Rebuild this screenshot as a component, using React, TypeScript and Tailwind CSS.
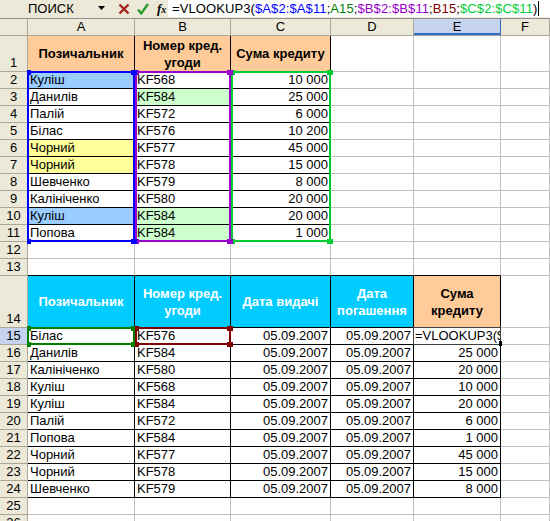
import React from 'react';

type C = {
  t?: string;
  bg?: string;
  al?: 'l' | 'r' | 'h';
  hd?: boolean;
  white?: boolean;
  blk?: boolean; // black right+bottom border
  bb?: boolean; // black bottom border only
};

const widths = ['w-[107px]', 'w-[96px]', 'w-[100px]', 'w-[83px]', 'w-[87px]', 'flex-1'];
const letters = ['A', 'B', 'C', 'D', 'E', 'F'];

const e: C = {};
const top = (a: string, b: string, c: string, abg = '', bbg = ''): C[] => [
  { t: a, bg: abg, blk: true },
  { t: b, bg: bbg, blk: true },
  { t: c, al: 'r', blk: true },
  e,
  e,
  e,
];
const bot = (a: string, b: string, s: string): C[] => [
  { t: a, blk: true },
  { t: b, blk: true },
  { t: '05.09.2007', al: 'r', blk: true },
  { t: '05.09.2007', al: 'r', blk: true },
  { t: s, al: 'r', blk: true },
  e,
];

const rows: { n: number; h: string; cells: C[]; sel?: boolean }[] = [
  {
    n: 1,
    h: 'h-[36px]',
    cells: [
      { t: 'Позичальник', bg: 'bg-[#ffcc99]', hd: true, blk: true },
      { t: 'Номер кред.\nугоди', bg: 'bg-[#ffcc99]', hd: true, blk: true },
      { t: 'Сума кредиту', bg: 'bg-[#ffcc99]', hd: true, blk: true },
      e,
      e,
      e,
    ],
  },
  { n: 2, h: 'h-[17px]', cells: top('Куліш', 'KF568', '10 000', 'bg-[#99ccff]') },
  { n: 3, h: 'h-[17px]', cells: top('Данилів', 'KF584', '25 000', '', 'bg-[#ccffcc]') },
  { n: 4, h: 'h-[17px]', cells: top('Палій', 'KF572', '6 000') },
  { n: 5, h: 'h-[17px]', cells: top('Білас', 'KF576', '10 200') },
  { n: 6, h: 'h-[17px]', cells: top('Чорний', 'KF577', '45 000', 'bg-[#ffff99]') },
  { n: 7, h: 'h-[17px]', cells: top('Чорний', 'KF578', '15 000', 'bg-[#ffff99]') },
  { n: 8, h: 'h-[17px]', cells: top('Шевченко', 'KF579', '8 000') },
  { n: 9, h: 'h-[17px]', cells: top('Калініченко', 'KF580', '20 000') },
  { n: 10, h: 'h-[17px]', cells: top('Куліш', 'KF584', '20 000', 'bg-[#99ccff]', 'bg-[#ccffcc]') },
  { n: 11, h: 'h-[17px]', cells: top('Попова', 'KF584', '1 000', '', 'bg-[#ccffcc]') },
  { n: 12, h: 'h-[17px]', cells: [e, e, e, e, e, e] },
  { n: 13, h: 'h-[17px]', cells: [{ bb: true }, { bb: true }, { bb: true }, { bb: true }, { bb: true }, e] },
  {
    n: 14,
    h: 'h-[52px]',
    cells: [
      { t: 'Позичальник', bg: 'bg-[#00ccff]', hd: true, white: true, blk: true },
      { t: 'Номер кред.\nугоди', bg: 'bg-[#00ccff]', hd: true, white: true, blk: true },
      { t: 'Дата видачі', bg: 'bg-[#00ccff]', hd: true, white: true, blk: true },
      { t: 'Дата\nпогашення', bg: 'bg-[#00ccff]', hd: true, white: true, blk: true },
      { t: 'Сума\nкредиту', bg: 'bg-[#ffcc99]', hd: true, blk: true },
      e,
    ],
  },
  { n: 15, h: 'h-[17px]', cells: bot('Білас', 'KF576', ''), sel: true },
  { n: 16, h: 'h-[17px]', cells: bot('Данилів', 'KF584', '25 000') },
  { n: 17, h: 'h-[17px]', cells: bot('Калініченко', 'KF580', '20 000') },
  { n: 18, h: 'h-[17px]', cells: bot('Куліш', 'KF568', '10 000') },
  { n: 19, h: 'h-[17px]', cells: bot('Куліш', 'KF584', '20 000') },
  { n: 20, h: 'h-[17px]', cells: bot('Палій', 'KF572', '6 000') },
  { n: 21, h: 'h-[17px]', cells: bot('Попова', 'KF584', '1 000') },
  { n: 22, h: 'h-[17px]', cells: bot('Чорний', 'KF577', '45 000') },
  { n: 23, h: 'h-[17px]', cells: bot('Чорний', 'KF578', '15 000') },
  { n: 24, h: 'h-[17px]', cells: bot('Шевченко', 'KF579', '8 000') },
  { n: 25, h: 'h-[17px]', cells: [e, e, e, e, e, e] },
  { n: 26, h: 'h-[17px]', cells: [e, e, e, e, e, e] },
];

function Cell({ c, w }: { c: C; w: string }) {
  const br = c.blk ? 'border-r-black' : 'border-r-[#c0c0c0]';
  const bbc = c.blk || c.bb ? 'border-b-black' : 'border-b-[#c0c0c0]';
  const layout = c.hd
    ? 'items-center justify-center text-center whitespace-pre-line font-bold leading-[17px]'
    : c.al === 'r'
      ? 'items-end justify-end whitespace-nowrap leading-[16px]'
      : 'items-end justify-start whitespace-nowrap leading-[16px]';
  return (
    <div
      className={`flex shrink-0 overflow-hidden border-r border-b px-[2px] ${w} ${br} ${bbc} ${c.bg || 'bg-white'} ${layout} ${
        c.white ? 'text-white' : 'text-black'
      }`}
    >
      {c.t}
    </div>
  );
}

// range finder box with the little corner handles
function Range({ pos, color }: { pos: string; color: string }) {
  return (
    <div className={`pointer-events-none absolute border-2 ${pos} ${color}`}>
      <div className="absolute -left-[2px] -top-[3px] h-[5px] w-[4px] bg-current" />
      <div className="absolute -right-[4px] -top-[3px] h-[5px] w-[6px] bg-current" />
      <div className="absolute -left-[2px] -bottom-[4px] h-[5px] w-[4px] bg-current" />
      <div className="absolute -right-[4px] -bottom-[4px] h-[5px] w-[6px] bg-current" />
    </div>
  );
}

export default function App() {
  return (
    <div className="relative h-[521px] w-[550px] overflow-hidden bg-white font-['Liberation_Sans',Arial,sans-serif] text-[13px] text-black">
      {/* formula bar */}
      <div className="flex h-[19px] items-start border-b border-[#8e8e8e] bg-[#ece9d8]">
        <div className="flex h-[17px] w-[168px] shrink-0 items-center">
          <span className="ml-[28px] w-[66px]">ПОИСК</span>
          <svg width="8" height="5" viewBox="0 0 8 5" className="ml-[4px]">
            <path d="M0 0h7L3.5 4z" fill="#000" />
          </svg>
          <svg width="12" height="12" viewBox="0 0 12 12" className="ml-[12px]">
            <path d="M1.5 1.5l9 9M10.5 1.5l-9 9" stroke="#a0241c" strokeWidth="2.4" />
          </svg>
          <svg width="12" height="12" viewBox="0 0 12 12" className="ml-[7px]">
            <path d="M1 6.5l3.2 4L11 1" stroke="#2f9a2f" strokeWidth="2.4" fill="none" />
          </svg>
          <span className="ml-[8px] font-['Liberation_Serif',serif] text-[13px] font-bold italic leading-none">
            f<span className="text-[10px]">x</span>
          </span>
        </div>
        <div className="flex h-[17px] flex-1 items-center whitespace-nowrap bg-white pl-[4px] tracking-[0.1px]">
          <span>=VLOOKUP3(</span>
          <span className="text-[#0000ff]">$A$2:$A$11</span>
          <span>;</span>
          <span className="text-[#008000]">A15</span>
          <span>;</span>
          <span className="text-[#9900cc]">$B$2:$B$11</span>
          <span>;</span>
          <span className="text-[#800000]">B15</span>
          <span>;</span>
          <span className="text-[#00cc33]">$C$2:$C$11</span>
          <span>)</span>
          <span className="ml-[1px] h-[15px] w-[1px] bg-black" />
        </div>
      </div>

      {/* column headers */}
      <div className="flex h-[17px] border-b border-[#aca899] bg-[#ece9d8]">
        <div className="w-[28px] shrink-0 border-r border-[#aca899]" />
        {letters.map((l, i) => (
          <div
            key={l}
            className={`flex shrink-0 items-center justify-center border-r ${widths[i]} ${
              l === 'E' ? 'border-r-[#316ac5] bg-[#c5d3ef] shadow-[inset_0_-2px_0_#316ac5]' : 'border-r-[#aca899]'
            }`}
          >
            {l}
          </div>
        ))}
      </div>

      {/* rows */}
      {rows.map((r) => (
        <div key={r.n} className={`flex ${r.h}`}>
          <div
            className={`flex w-[28px] shrink-0 items-end justify-center border-r border-b leading-[16px] ${
              r.sel ? 'border-r-[#316ac5] border-b-[#aca899] bg-[#c5d3ef]' : 'border-[#aca899] bg-[#ece9d8]'
            }`}
          >
            {r.n}
          </div>
          {r.cells.map((c, i) => (
            <Cell key={i} c={c} w={widths[i]} />
          ))}
        </div>
      ))}

      {/* range finder borders */}
      <Range pos="left-[231px] top-[71px] h-[171px] w-[100px]" color="border-[#00cc33] text-[#00cc33]" />
      <Range pos="left-[135px] top-[71px] h-[171px] w-[96px]" color="border-[#9900cc] text-[#9900cc]" />
      <Range pos="left-[27px] top-[71px] h-[171px] w-[108px]" color="border-[#0000ff] text-[#0000ff]" />
      <Range pos="left-[27px] top-[327px] h-[18px] w-[108px]" color="border-[#008000] text-[#008000]" />
      <Range pos="left-[135px] top-[327px] h-[18px] w-[96px]" color="border-[#800000] text-[#800000]" />

      {/* cell in edit mode */}
      <div className="absolute left-[413px] top-[327px] flex h-[18px] w-[88px] items-end overflow-hidden whitespace-nowrap border border-[#404040] bg-white pl-[1px] leading-[16px]">
        =VLOOKUP3($A$2
      </div>
      <div className="absolute left-[499px] top-[341px] h-[5px] w-[3px] bg-black" />
    </div>
  );
}
